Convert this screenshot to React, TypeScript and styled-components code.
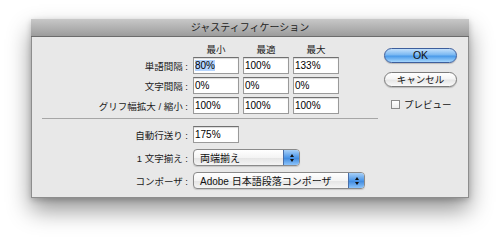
import React from 'react';
import styled, { createGlobalStyle } from 'styled-components';

const GlobalStyle = createGlobalStyle`
    html, body {
        margin: 0;
        padding: 0;
        background: #ffffff;
    }

    body {
        font-family: "Liberation Sans", "Noto Sans CJK JP", sans-serif;
        font-size: 9.5px;
        color: #111;
    }
`;

const Page = styled.div`
    width: 500px;
    height: 241px;
    padding: 19px 0 0 31px;
    box-sizing: border-box;
`;

const Window = styled.div`
    width: 438px;
    height: 179px;
    box-sizing: border-box;
    border: 1px solid #8d8d8d;
    border-top: none;
    background: #e8e8e8;
    box-shadow: 0 12px 22px rgba(0, 0, 0, 0.42), 0 2px 6px rgba(0, 0, 0, 0.2);
    display: flex;
    flex-direction: column;
`;

const TitleBar = styled.div`
    height: 17px;
    margin: 0 -1px;
    background: linear-gradient(#c8c8c8, #9c9c9c);
    border-bottom: 1px solid #6c6c6c;
    text-align: center;
    line-height: 17px;
    font-size: 10px;
    color: #222;
    flex-shrink: 0;
`;

const Content = styled.div`
    display: flex;
    padding: 8px 0 0 10px;
`;

const Form = styled.div`
    width: 336px;
    display: flex;
    flex-direction: column;
`;

const Grid = styled.div<{ $rowGap: number; $top?: number }>`
    display: grid;
    grid-template-columns: 147px 46px 46px 46px;
    column-gap: 4px;
    row-gap: ${p => p.$rowGap}px;
    margin-top: ${p => p.$top || 0}px;
    align-items: center;
`;

const Heading = styled.div`
    height: 9px;
    line-height: 9px;
    text-align: center;
    color: #222;
`;

const Label = styled.div`
    text-align: right;
    white-space: nowrap;
    padding-right: 1px;
    color: #1a1a1a;
`;

const Field = styled.div`
    height: 17px;
    box-sizing: border-box;
    background: #fff;
    border: 1px solid #9a9a9a;
    border-top-color: #707070;
    box-shadow: inset 0 1px 1px rgba(0, 0, 0, 0.15);
    padding: 0 1px;
    line-height: 15px;
    font-size: 10px;
    color: #000;
`;

const Selected = styled.span`
    background: #b5d5ff;
`;

const Separator = styled.div`
    height: 1px;
    margin-top: 4px;
    background: #a6a6a6;
`;

const PopupCell = styled.div`
    grid-column: 2 / -1;
`;

const Popup = styled.div<{ $width: number }>`
    width: ${p => p.$width}px;
    height: 17px;
    box-sizing: border-box;
    border: 1px solid #8a8a8a;
    border-radius: 4px;
    background: linear-gradient(#ffffff, #f4f4f4 50%, #e4e4e4 51%, #f4f4f4);
    box-shadow: 0 1px 1px rgba(0, 0, 0, 0.15);
    display: flex;
    align-items: center;
    padding-left: 6px;
    overflow: hidden;
`;

const PopupText = styled.span`
    flex: 1;
    white-space: nowrap;
    font-size: 10px;
`;

const Stepper = styled.div`
    width: 15px;
    align-self: stretch;
    background: linear-gradient(#a8d0f7, #4d97e8 50%, #3b86dc 51%, #8cc4fb);
    border-left: 1px solid #4a6fa8;
    display: flex;
    flex-direction: column;
    align-items: center;
    justify-content: center;
    gap: 2px;
`;

const Arrow = styled.div<{ $up?: boolean }>`
    width: 0;
    height: 0;
    border-left: 2.5px solid transparent;
    border-right: 2.5px solid transparent;
    ${p => p.$up ? 'border-bottom: 3px solid #111;' : 'border-top: 3px solid #111;'}
`;

const Side = styled.div`
    margin-left: 6px;
    padding-top: 3px;
    width: 73px;
    display: flex;
    flex-direction: column;
`;

const Button = styled.div<{ $primary?: boolean; $top?: number }>`
    height: 15px;
    margin-top: ${p => p.$top || 0}px;
    box-sizing: border-box;
    border-radius: 8px;
    text-align: center;
    line-height: 13px;
    font-size: ${p => p.$primary ? 10.5 : 9.5}px;
    color: #111;
    border: 1px solid ${p => p.$primary ? '#3d5e9c' : '#7c7c7c'};
    background: ${p => p.$primary
        ? 'linear-gradient(#c3e0fb, #7ab8f2 45%, #4a9ae9 55%, #a5d6fd)'
        : 'linear-gradient(#ffffff, #f5f5f5 45%, #e6e6e6 55%, #fafafa)'};
    box-shadow: 0 1px 1px rgba(0, 0, 0, 0.2);
`;

const CheckRow = styled.div`
    display: flex;
    align-items: center;
    gap: 4px;
    margin: 10px 0 0 7px;
`;

const Checkbox = styled.div`
    width: 9px;
    height: 9px;
    box-sizing: border-box;
    border: 1px solid #8a8a8a;
    background: linear-gradient(#ffffff, #ececec);
`;

function Select({ value, width }: { value: string; width: number }) {
    return (
        <Popup $width={width}>
            <PopupText>{value}</PopupText>
            <Stepper>
                <Arrow $up />
                <Arrow />
            </Stepper>
        </Popup>
    );
}

const rows = [
    { label: '単語間隔 :', values: ['80%', '100%', '133%'] },
    { label: '文字間隔 :', values: ['0%', '0%', '0%'] },
    { label: 'グリフ幅拡大 / 縮小 :', values: ['100%', '100%', '100%'] },
];

export default function App() {
    return (
        <>
            <GlobalStyle />
            <Page>
                <Window>
                    <TitleBar>ジャスティフィケーション</TitleBar>
                    <Content>
                        <Form>
                            <Grid $rowGap={3}>
                                <div />
                                <Heading>最小</Heading>
                                <Heading>最適</Heading>
                                <Heading>最大</Heading>
                                {rows.map((row, i) => (
                                    <React.Fragment key={i}>
                                        <Label>{row.label}</Label>
                                        {row.values.map((v, j) => (
                                            <Field key={j}>
                                                {i === 0 && j === 0 ? <Selected>{v}</Selected> : v}
                                            </Field>
                                        ))}
                                    </React.Fragment>
                                ))}
                            </Grid>

                            <Separator />

                            <Grid $rowGap={6} $top={7}>
                                <Label>自動行送り :</Label>
                                <Field>175%</Field>
                                <div />
                                <div />

                                <Label>1 文字揃え :</Label>
                                <PopupCell>
                                    <Select value="両端揃え" width={107} />
                                </PopupCell>

                                <Label>コンポーザ :</Label>
                                <PopupCell>
                                    <Select value="Adobe 日本語段落コンポーザ" width={172} />
                                </PopupCell>
                            </Grid>
                        </Form>

                        <Side>
                            <Button $primary>OK</Button>
                            <Button $top={9}>キャンセル</Button>
                            <CheckRow>
                                <Checkbox />
                                <span>プレビュー</span>
                            </CheckRow>
                        </Side>
                    </Content>
                </Window>
            </Page>
        </>
    );
}
